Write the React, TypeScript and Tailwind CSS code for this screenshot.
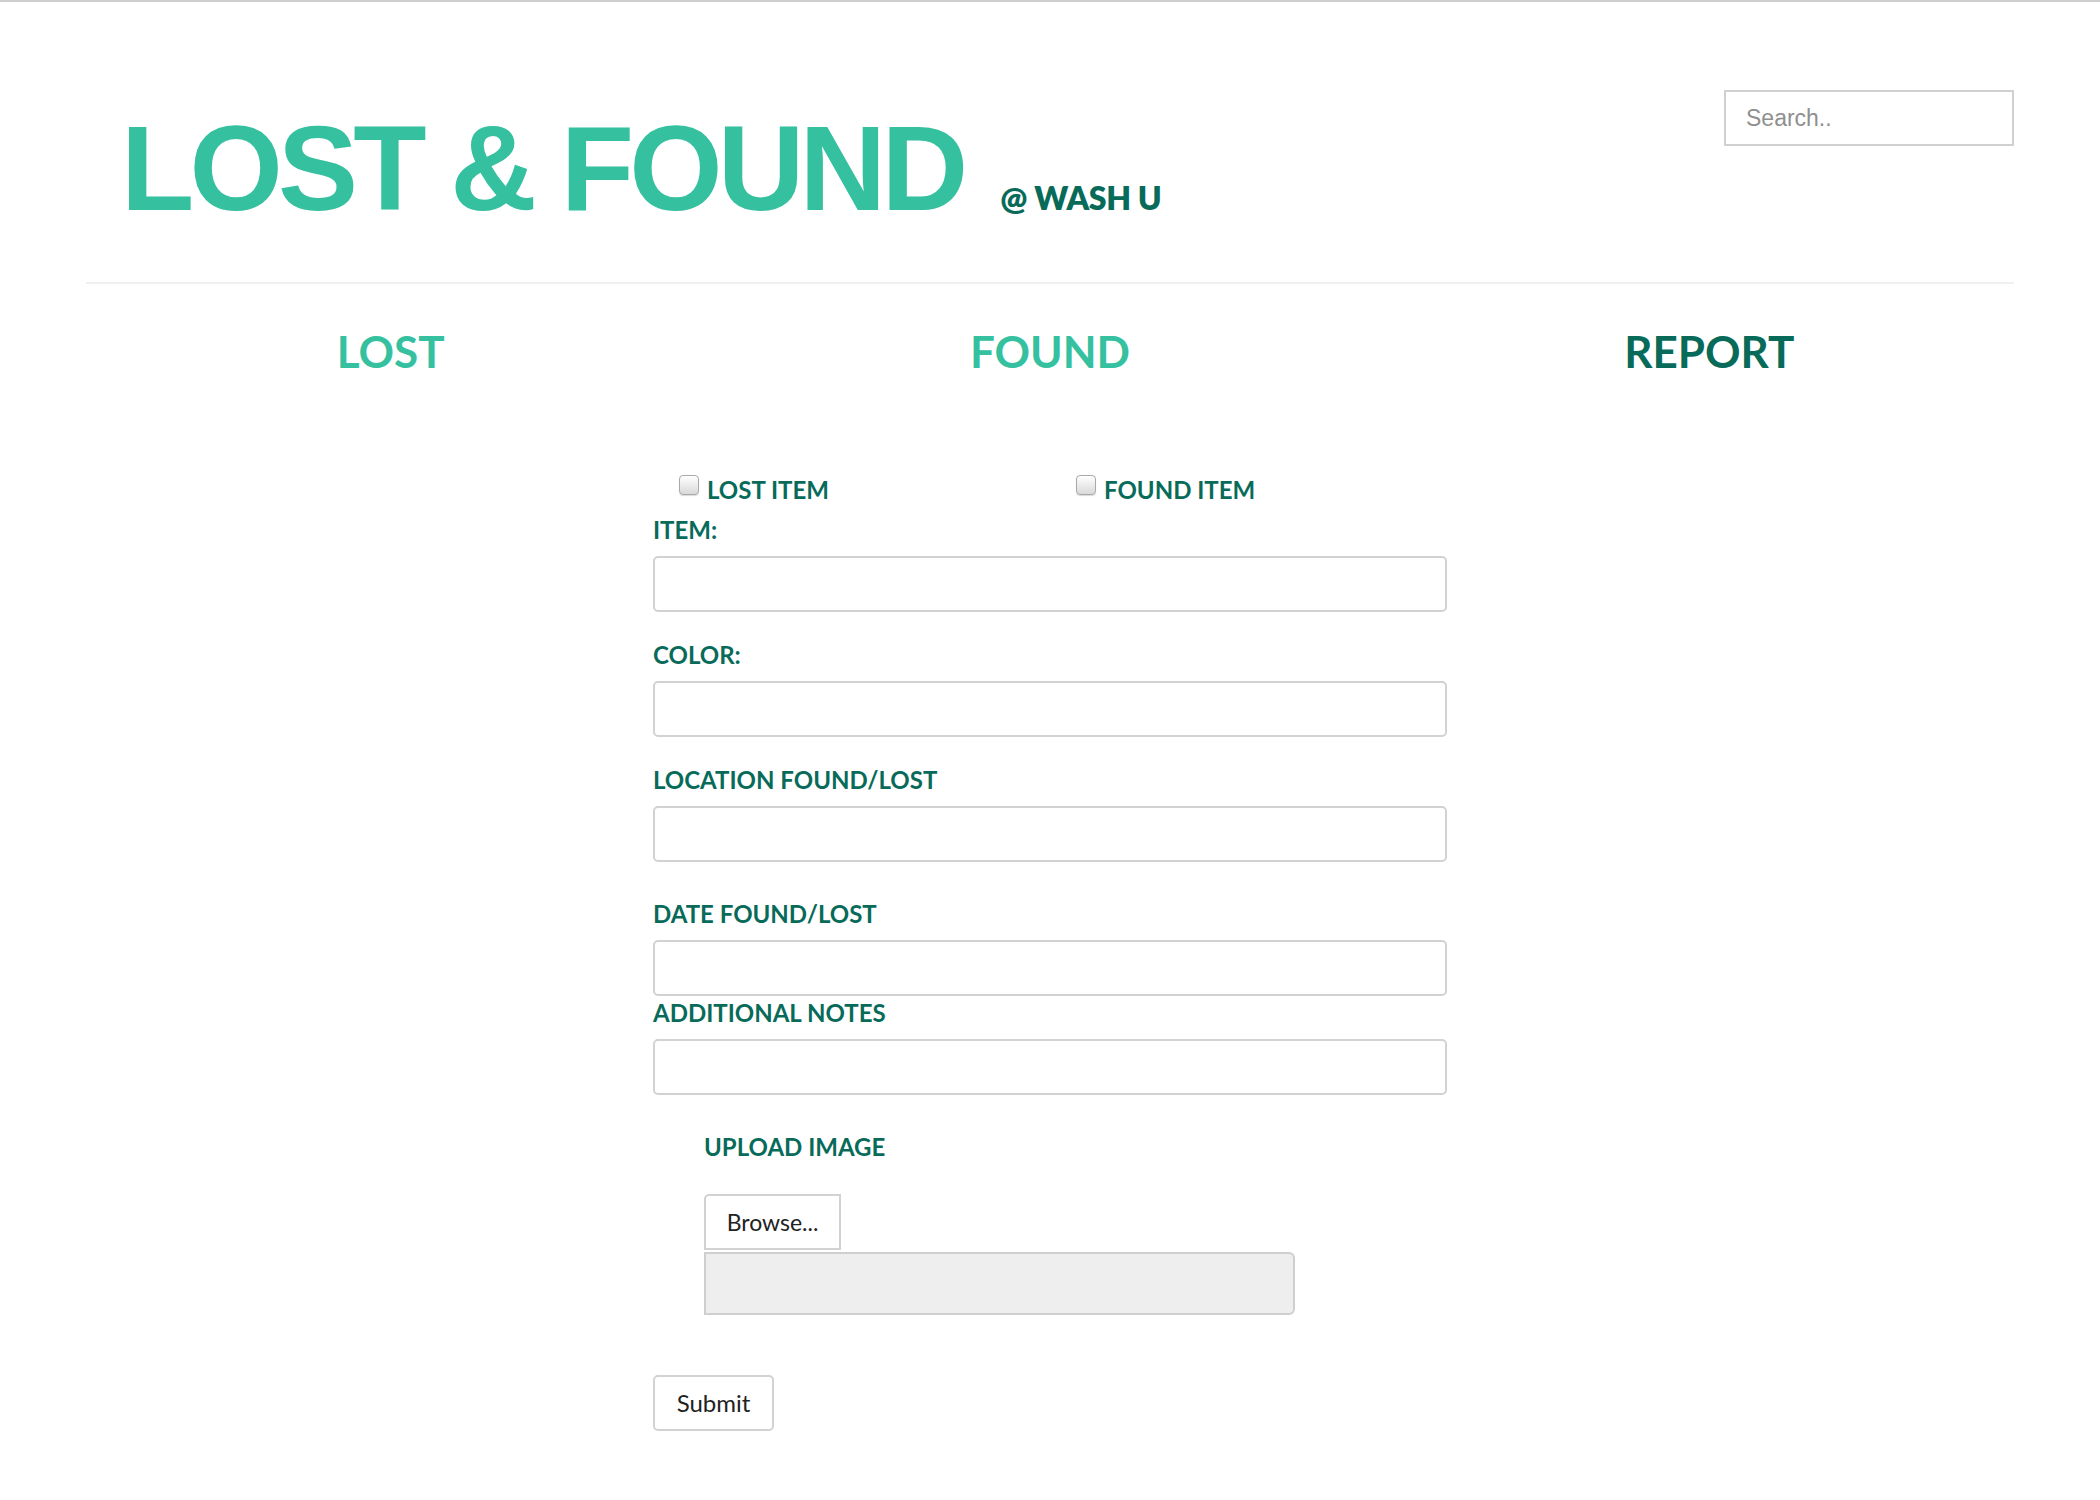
const LIGHT = "text-[#35c19f]";
const DARK = "text-[#086b5a]";

const Field = ({ label, gapTop }: { label: string; gapTop: string }) => (
  <div className={gapTop}>
    <div className={`${DARK} text-[24px] leading-[30px] font-bold`}>{label}</div>
    <input
      type="text"
      className="mt-[11px] block w-full h-[56px] rounded-[5px] border-2 border-[#d2d2d2] bg-white px-3 text-[22px] outline-none"
    />
  </div>
);

const CheckItem = ({ label }: { label: string }) => (
  <label className="flex items-start pl-[26px]">
    <span className="mt-[3px] h-[20px] w-[20px] rounded-[4px] border border-[#a9a9a9] bg-gradient-to-b from-white to-[#d9d9d9] shadow-[0_1px_1px_rgba(0,0,0,0.15)]" />
    <span className={`${DARK} ml-[8px] mt-[3px] text-[24px] leading-[30px] font-bold`}>{label}</span>
  </label>
);

export default function App() {
  return (
    <div className="min-h-[1500px] bg-white border-t-2 border-[#cfcfcf] font-['Lato','Open_Sans',sans-serif]">
      <div className="w-[1928px] mx-auto">
        <header className="flex justify-between">
          <div className="flex items-baseline pl-[35px] pt-[106px]">
            <h1 className={`${LIGHT} font-['Liberation_Sans',Arial,sans-serif] font-bold text-[120px] leading-none tracking-[-0.04em]`}>
              LOST &amp; FOUND
            </h1>
            <span className={`${DARK} ml-[37px] text-[32px] font-extrabold tracking-[-0.01em]`}>@ WASH U</span>
          </div>
          <input
            type="text"
            placeholder="Search.."
            className="mt-[88px] w-[290px] h-[56px] border-2 border-[#d0d0d0] pl-[20px] text-[23px] font-['Liberation_Sans',Arial,sans-serif] text-[#555] placeholder:text-[#8f8f8f] outline-none"
          />
        </header>
        <hr className="mt-[54px] border-0 border-t-2 border-[#f0f0f0]" />
      </div>

      <nav className="w-[1978px] mx-auto mt-[37px] grid grid-cols-3 text-center text-[44px] leading-[60px] font-bold">
        <a className={LIGHT}>LOST</a>
        <a className={LIGHT}>FOUND</a>
        <a className={DARK}>REPORT</a>
      </nav>

      <form className="w-[794px] mx-auto mt-[91px] pb-[70px]">
        <div className="grid grid-cols-2">
          <CheckItem label="LOST ITEM" />
          <CheckItem label="FOUND ITEM" />
        </div>

        <div className="mt-[10px]">
          <div className={`${DARK} text-[24px] leading-[30px] font-bold`}>ITEM:</div>
          <input
            type="text"
            className="mt-[11px] block w-full h-[56px] rounded-[5px] border-2 border-[#d2d2d2] bg-white px-3 text-[22px] outline-none"
          />
        </div>
        <Field label="COLOR:" gapTop="mt-[28px]" />
        <Field label="LOCATION FOUND/LOST" gapTop="mt-[28px]" />
        <Field label="DATE FOUND/LOST" gapTop="mt-[37px]" />
        <Field label="ADDITIONAL NOTES" gapTop="mt-[2px]" />

        <div className="pl-[51px] mt-[37px]">
          <div className={`${DARK} text-[24px] leading-[30px] font-bold`}>UPLOAD IMAGE</div>
          <button
            type="button"
            className="mt-[32px] block w-[137px] h-[56px] rounded-tl-[5px] border-2 border-[#d2d2d2] bg-white text-[23px] text-[#222]"
          >
            Browse...
          </button>
          <div className="mt-[2px] w-[591px] h-[63px] rounded-r-[6px] border-2 border-[#cfcfcf] bg-[#eeeeee]" />
        </div>

        <button
          type="submit"
          className="mt-[60px] block w-[121px] h-[56px] rounded-[5px] border-2 border-[#d2d2d2] bg-white text-[24px] text-[#222]"
        >
          Submit
        </button>
      </form>
    </div>
  );
}
